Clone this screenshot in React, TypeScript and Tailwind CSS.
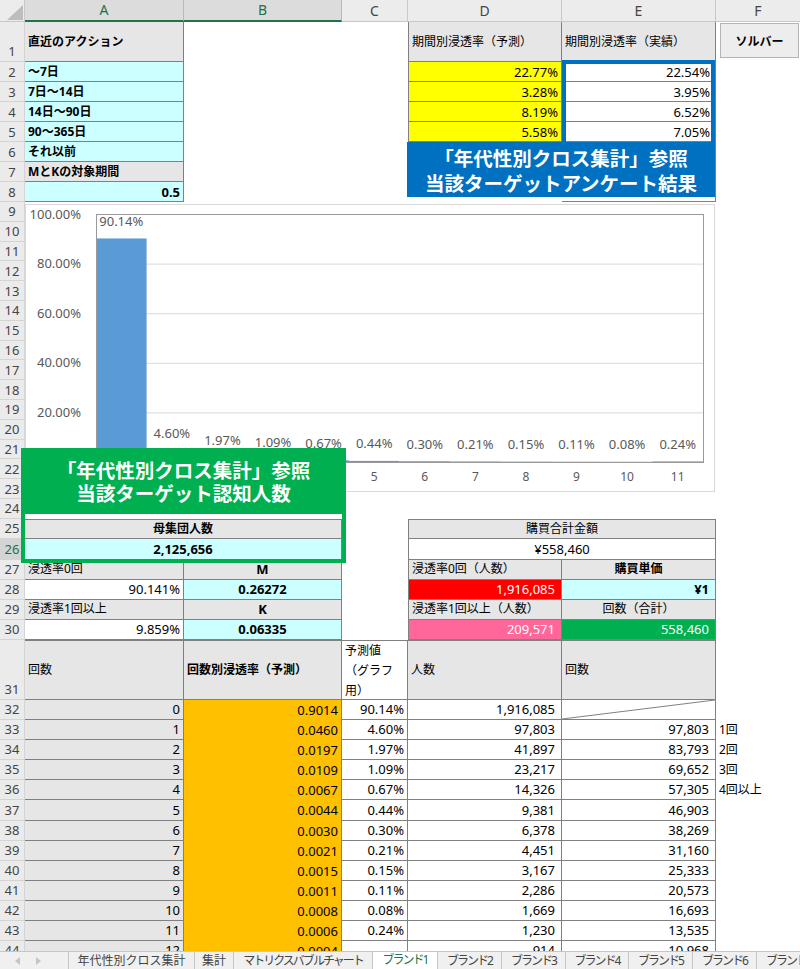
import React from 'react';

const WA = 'w-[159px]';
const WB = 'w-[158px]';
const WC = 'w-[66px]';
const WD = 'w-[154px]';
const WE = 'w-[154px]';
const WF = 'flex-1';
const WAB = 'w-[317px]';
const WDE = 'w-[308px]';

const GRAY = 'bg-[#e7e6e6]';
const CYAN = 'bg-[#ccffff]';
const YEL = 'bg-[#ffff00]';
const ORG = 'bg-[#ffc000]';
const BD = 'border-r border-b border-[#808080]';
const BL = 'border-l';
const BT = 'border-t';
const R = 'justify-end';
const CC = 'justify-center';
const BO = 'font-bold';
const JP = 'text-[12px]';

function Cell({ w, t, c = '' }: { w: string; t?: React.ReactNode; c?: string }) {
  return (
    <div className={`relative shrink-0 flex items-center overflow-hidden whitespace-nowrap px-[3px] ${w} ${c}`}>
      {t}
    </div>
  );
}

function RH({ n, sel, bottom }: { n: number; sel?: boolean; bottom?: boolean }) {
  return (
    <div
      className={`w-[25px] shrink-0 flex justify-center border-r border-b border-[#d4d4d4] text-[13px] ${
        bottom ? 'items-end pb-[2px]' : 'items-center'
      } ${sel ? 'bg-[#d4d4d4] text-[#217346]' : 'bg-[#ebebeb] text-[#444]'}`}
    >
      {n}
    </div>
  );
}

function Row({ n, h, sel, bottom, children }: { n: number; h: string; sel?: boolean; bottom?: boolean; children?: React.ReactNode }) {
  return (
    <div className={`flex ${h}`}>
      <RH n={n} sel={sel} bottom={bottom} />
      {children}
    </div>
  );
}

function Header() {
  const col = (label: string, w: string, sel?: boolean) => (
    <div
      className={`shrink-0 flex items-center justify-center border-r text-[14px] ${w} ${
        sel
          ? 'bg-[#dcdcdc] text-[#217346] border-[#b8b8b8] border-b-2 border-b-[#217346]'
          : 'bg-[#ececec] text-[#444] border-[#c8c8c8] border-b border-b-[#c8c8c8]'
      }`}
    >
      {label}
    </div>
  );
  return (
    <div className="flex h-[22px]">
      <div className="w-[25px] shrink-0 bg-[#ececec] border-r border-b border-[#c8c8c8] relative">
        <svg width="25" height="22" className="absolute inset-0">
          <polygon points="7,20 23,20 23,5" fill="#bdbdbd" />
        </svg>
      </div>
      {col('A', WA, true)}
      {col('B', WB, true)}
      {col('C', WC)}
      {col('D', WD)}
      {col('E', WE)}
      <div className="flex-1 flex items-center justify-center bg-[#ececec] text-[#444] text-[14px] border-b border-[#c8c8c8]">F</div>
    </div>
  );
}

const vals = [90.14, 4.6, 1.97, 1.09, 0.67, 0.44, 0.3, 0.21, 0.15, 0.11, 0.08, 0.24];

function Chart() {
  const PX0 = 71;
  const PX1 = 678;
  const PY0 = 10;
  const PY1 = 258;
  const PH = PY1 - PY0;
  const cw = (PX1 - PX0) / 12;
  return (
    <div className="absolute left-[25px] top-[204px] w-[690px] h-[288px]">
      <svg width="690" height="288" className="block font-['Noto_Sans',sans-serif]">
        <rect x="0.5" y="0.5" width="689" height="287" fill="#ffffff" stroke="#d9d9d9" />
        {[0.2, 0.4, 0.6, 0.8].map((f) => (
          <line key={f} x1={PX0} x2={PX1} y1={PY1 - f * PH + 0.5} y2={PY1 - f * PH + 0.5} stroke="#d9d9d9" strokeWidth="1" />
        ))}
        {vals.map((v, i) => {
          const h = (v / 100) * PH;
          return <rect key={i} x={PX0 + i * cw} y={PY1 - h} width={cw} height={Math.max(h, 1)} fill="#5b9bd5" />;
        })}
        <rect x={PX0 + 0.5} y={PY0 + 0.5} width={PX1 - PX0} height={PH} fill="none" stroke="#9a9a9a" strokeWidth="1" />
        {['20.00%', '40.00%', '60.00%', '80.00%', '100.00%'].map((l, i) => (
          <text key={l} x="56" y={PY1 - ((i + 1) / 5) * PH + 4.5} textAnchor="end" fontSize="13" fill="#595959">
            {l}
          </text>
        ))}
        {vals.map((v, i) => {
          const h = (v / 100) * PH;
          return (
            <text key={i} x={PX0 + (i + 0.5) * cw} y={PY1 - h - 12.5} textAnchor="middle" fontSize="13" fill="#595959">
              {v.toFixed(2)}%
            </text>
          );
        })}
        {vals.map((_, i) =>
          i < 5 ? null : (
            <text key={i} x={PX0 + (i + 0.5) * cw} y="277" textAnchor="middle" fontSize="12" fill="#595959">
              {i}
            </text>
          )
        )}
      </svg>
    </div>
  );
}

const tbl: [number, string, string, string, string | null, string][] = [
  [0, '0.9014', '90.14%', '1,916,085', null, ''],
  [1, '0.0460', '4.60%', '97,803', '97,803', '1回'],
  [2, '0.0197', '1.97%', '41,897', '83,793', '2回'],
  [3, '0.0109', '1.09%', '23,217', '69,652', '3回'],
  [4, '0.0067', '0.67%', '14,326', '57,305', '4回以上'],
  [5, '0.0044', '0.44%', '9,381', '46,903', ''],
  [6, '0.0030', '0.30%', '6,378', '38,269', ''],
  [7, '0.0021', '0.21%', '4,451', '31,160', ''],
  [8, '0.0015', '0.15%', '3,167', '25,333', ''],
  [9, '0.0011', '0.11%', '2,286', '20,573', ''],
  [10, '0.0008', '0.08%', '1,669', '16,693', ''],
  [11, '0.0006', '0.24%', '1,230', '13,535', ''],
  [12, '0.0004', '', '914', '10,968', ''],
];

const topRows: [string, string, string][] = [
  ['～7日', '22.77%', '22.54%'],
  ['7日～14日', '3.28%', '3.95%'],
  ['14日～90日', '8.19%', '6.52%'],
  ['90～365日', '5.58%', '7.05%'],
];

function Tabs() {
  const tabs: [string, string, boolean, boolean][] = [
    ['年代性別クロス集計', 'w-[126px]', false, false],
    ['集計', 'w-[39px]', false, false],
    ['マトリクスバブルチャート', 'w-[139px]', false, true],
    ['ブランド1', 'w-[65px]', true, true],
    ['ブランド2', 'w-[64px]', false, true],
    ['ブランド3', 'w-[64px]', false, true],
    ['ブランド4', 'w-[63px]', false, true],
    ['ブランド5', 'w-[64px]', false, true],
    ['ブランド6', 'w-[64px]', false, true],
    ['ブランド7', 'w-[64px]', false, true],
  ];
  return (
    <div className="flex h-[18px] bg-[#f0f0f0] border-t border-[#c6c6c6] text-[12px] text-[#444] overflow-hidden">
      <div className="w-[68px] shrink-0 flex items-center pl-[15px] gap-[15px]">
        <svg width="6" height="8"><polygon points="5,0 5,8 0,4" fill="#c4c4c4" /></svg>
        <svg width="6" height="8"><polygon points="0,0 0,8 5,4" fill="#c4c4c4" /></svg>
      </div>
      {tabs.map(([t, w, act, tight]) => (
        <div
          key={t}
          className={`shrink-0 flex items-center justify-center whitespace-nowrap border-l border-[#c6c6c6] ${w} ${
            tight ? 'tracking-[-2px]' : ''
          } ${act ? 'bg-white text-[#217346] -mt-px' : ''}`}
        >
          {t}
        </div>
      ))}
    </div>
  );
}

export default function App() {
  return (
    <div className="w-[800px] h-[969px] flex flex-col bg-white overflow-hidden font-['Noto_Sans','Noto_Sans_CJK_JP',sans-serif] text-black">
      <div className="relative h-[951px] shrink-0 overflow-hidden text-[13px] leading-[16px]">
        <Header />
        <Row n={1} h="h-[40px]" bottom>
          <Cell w={WA} t="直近のアクション" c={`${GRAY} ${BD} ${BO} ${JP}`} />
          <Cell w={WB} />
          <Cell w={WC} />
          <Cell w={WD} t="期間別浸透率（予測）" c={`${GRAY} ${BD} ${BL} ${JP}`} />
          <Cell w={WE} t="期間別浸透率（実績）" c={`${GRAY} ${BD} ${JP}`} />
          <Cell w={WF} />
        </Row>
        {topRows.map(([a, d, e], i) => (
          <Row key={a} n={i + 2} h="h-[20px]">
            <Cell w={WA} t={a} c={`${CYAN} ${BD} ${BO} ${JP}`} />
            <Cell w={WB} />
            <Cell w={WC} />
            <Cell w={WD} t={d} c={`${YEL} ${BD} ${BL} ${R}`} />
            <Cell w={WE} t={e} c={`${BD} ${R} pr-[5px]`} />
            <Cell w={WF} />
          </Row>
        ))}
        <Row n={6} h="h-[20px]">
          <Cell w={WA} t="それ以前" c={`${CYAN} ${BD} ${BO} ${JP}`} />
          <Cell w={WB} />
          <Cell w={WC} />
          <Cell w={WD} />
          <Cell w={WE} c={BD} />
          <Cell w={WF} />
        </Row>
        <Row n={7} h="h-[20px]">
          <Cell w={WA} t="MとKの対象期間" c={`${GRAY} ${BD} ${BO} ${JP}`} />
          <Cell w={WB} />
          <Cell w={WC} />
          <Cell w={WD} />
          <Cell w={WE} c={BD} />
          <Cell w={WF} />
        </Row>
        <Row n={8} h="h-[20px]">
          <Cell w={WA} t="0.5" c={`${CYAN} ${BD} ${BO} ${R}`} />
          <Cell w={WB} />
          <Cell w={WC} />
          <Cell w={WD} />
          <Cell w={WE} c={BD} />
          <Cell w={WF} />
        </Row>
        {Array.from({ length: 16 }, (_, i) => (
          <Row key={i} n={i + 9} h="h-[19.8px]">
            <div className="flex-1" />
          </Row>
        ))}
        <Row n={25} h="h-[20px]">
          <Cell w={WAB} t="母集団人数" c={`${GRAY} ${BD} ${BT} ${BO} ${CC} ${JP}`} />
          <Cell w={WC} />
          <Cell w={WDE} t="購買合計金額" c={`${GRAY} ${BD} ${BT} ${BL} ${CC} ${JP}`} />
          <Cell w={WF} />
        </Row>
        <Row n={26} h="h-[21.2px]" sel>
          <Cell w={WAB} t="2,125,656" c={`${CYAN} ${BD} ${BO} ${CC}`} />
          <Cell w={WC} />
          <Cell w={WDE} t="¥558,460" c={`${BD} ${BL} ${CC}`} />
          <Cell w={WF} />
        </Row>
        <Row n={27} h="h-[20px]">
          <Cell w={WA} t="浸透率0回" c={`${GRAY} ${BD} ${JP}`} />
          <Cell w={WB} t="M" c={`${GRAY} ${BD} ${BO} ${CC}`} />
          <Cell w={WC} />
          <Cell w={WD} t="浸透率0回（人数）" c={`${GRAY} ${BD} ${BL} ${JP}`} />
          <Cell w={WE} t="購買単価" c={`${GRAY} ${BD} ${BO} ${CC} ${JP}`} />
          <Cell w={WF} />
        </Row>
        <Row n={28} h="h-[20px]">
          <Cell w={WA} t="90.141%" c={`${BD} ${R}`} />
          <Cell w={WB} t="0.26272" c={`${CYAN} ${BD} ${BO} ${CC}`} />
          <Cell w={WC} />
          <Cell w={WD} t="1,916,085" c={`bg-[#ff0000] text-white ${BD} ${BL} ${R} pr-[6px]`} />
          <Cell w={WE} t="¥1" c={`${CYAN} ${BD} ${BO} ${R} pr-[6px]`} />
          <Cell w={WF} />
        </Row>
        <Row n={29} h="h-[20px]">
          <Cell w={WA} t="浸透率1回以上" c={`${GRAY} ${BD} ${JP}`} />
          <Cell w={WB} t="K" c={`${GRAY} ${BD} ${BO} ${CC}`} />
          <Cell w={WC} />
          <Cell w={WD} t="浸透率1回以上（人数）" c={`${GRAY} ${BD} ${BL} ${JP}`} />
          <Cell w={WE} t="回数（合計）" c={`${GRAY} ${BD} ${CC} ${JP}`} />
          <Cell w={WF} />
        </Row>
        <Row n={30} h="h-[20px]">
          <Cell w={WA} t="9.859%" c={`${BD} ${R}`} />
          <Cell w={WB} t="0.06335" c={`${CYAN} ${BD} ${BO} ${CC}`} />
          <Cell w={WC} />
          <Cell w={WD} t="209,571" c={`bg-[#ff6699] text-white ${BD} ${BL} ${R} pr-[6px]`} />
          <Cell w={WE} t="558,460" c={`bg-[#00b050] text-white ${BD} ${R} pr-[6px]`} />
          <Cell w={WF} />
        </Row>
        <Row n={31} h="h-[60px]" bottom>
          <Cell w={WA} t="回数" c={`${GRAY} ${BD} ${BT} ${JP}`} />
          <Cell w={WB} t="回数別浸透率（予測）" c={`${GRAY} ${BD} ${BT} ${BO} ${JP}`} />
          <div className={`shrink-0 ${WC} ${BD} ${BT} px-[3px] text-[12px] leading-[20px] whitespace-nowrap overflow-hidden`}>
            予測値
            <br />
            （グラフ
            <br />
            用）
          </div>
          <Cell w={WD} t="人数" c={`${GRAY} ${BD} ${BT} ${JP}`} />
          <Cell w={WE} t="回数" c={`${GRAY} ${BD} ${BT} ${JP}`} />
          <Cell w={WF} />
        </Row>
        {tbl.map(([n, b, c, d, e, f]) => (
          <Row key={n} n={n + 32} h={n === 5 ? 'h-[21px]' : 'h-[20px]'}>
            <Cell w={WA} t={String(n)} c={`${GRAY} ${BD} ${R}`} />
            <Cell w={WB} t={b} c={`${ORG} border-r border-[#808080] ${R}`} />
            <Cell w={WC} t={c} c={`${BD} ${R}`} />
            <Cell w={WD} t={d} c={`${BD} ${R} pr-[6px]`} />
            {e === null ? (
              <Cell
                w={WE}
                c={BD}
                t={
                  <svg className="absolute inset-0 w-full h-full" viewBox="0 0 100 100" preserveAspectRatio="none">
                    <line x1="0" y1="100" x2="100" y2="0" stroke="#808080" strokeWidth="1" vectorEffect="non-scaling-stroke" />
                  </svg>
                }
              />
            ) : (
              <Cell w={WE} t={e} c={`${BD} ${R} pr-[6px]`} />
            )}
            <Cell w={WF} t={f} c={JP} />
          </Row>
        ))}

        <Chart />

        {/* Blue callout */}
        <div className="absolute left-[562px] top-[60px] w-[153px] h-[82px] border-[4px] border-b-0 border-[#0070c0]" />
        <div className="absolute left-[407px] top-[142px] w-[308px] h-[55px] bg-[#0070c0] flex flex-col items-center justify-center text-white font-bold text-[19.5px] leading-[25px] font-['Noto_Sans_CJK_JP',sans-serif]">
          <div>「年代性別クロス集計」参照</div>
          <div>当該ターゲットアンケート結果</div>
        </div>

        {/* Green callout */}
        <div className="absolute left-[21px] top-[448px] w-[325px] flex flex-col">
          <div className="h-[66px] bg-[#00b050] flex flex-col items-center justify-center text-white font-bold text-[19.5px] leading-[23px] font-['Noto_Sans_CJK_JP',sans-serif]">
            <div>「年代性別クロス集計」参照</div>
            <div>当該ターゲット認知人数</div>
          </div>
          <div className="h-[49px] border-[4px] border-t-0 border-[#00b050]" />
        </div>

        {/* Solver button */}
        <div className="absolute left-[720px] top-[23px] w-[79px] h-[35px] bg-[#ededed] border border-[#b4b4b4] flex items-center justify-center font-bold text-[12px] font-['Noto_Sans_CJK_JP',sans-serif]">
          ソルバー
        </div>
      </div>
      <Tabs />
    </div>
  );
}
